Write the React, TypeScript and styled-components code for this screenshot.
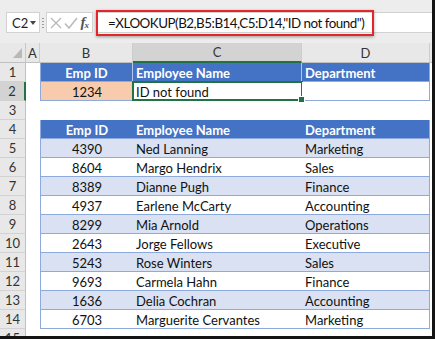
import React from 'react';
import styled, { createGlobalStyle, css } from 'styled-components';

const GlobalStyle = createGlobalStyle`
  html, body {
    margin: 0;
    padding: 0;
    background: #fff;
  }
  body {
    font-family: Lato, 'Liberation Sans', sans-serif;
    color: #111;
  }
`;

const Frame = styled.div`
  width: 435px;
  height: 339px;
  box-sizing: border-box;
  border-right: 3px solid #141414;
  border-bottom: 3px solid #141414;
  overflow: hidden;
  display: flex;
  flex-direction: column;
  background: #fff;
`;

const FormulaBar = styled.div`
  height: 43px;
  flex: none;
  box-sizing: border-box;
  background: #ededed;
  display: flex;
  align-items: flex-start;
  padding: 12px 0 0 6px;
`;

const NameBox = styled.div`
  width: 34px;
  height: 21px;
  box-sizing: border-box;
  background: #fff;
  border: 1px solid #d2d2d2;
  display: flex;
  align-items: center;
  padding-left: 5px;
  font-size: 13px;
  color: #222;
`;

const Caret = styled.span`
  width: 0;
  height: 0;
  margin-left: 2px;
  border-left: 3px solid transparent;
  border-right: 3px solid transparent;
  border-top: 4px solid #444;
`;

const Grip = styled.div`
  width: 2px;
  height: 11px;
  margin: 5px 2px 0 2px;
  background-image: radial-gradient(circle, #9a9a9a 0.8px, transparent 1px);
  background-size: 2px 3px;
`;

const ButtonBox = styled.div`
  width: 47px;
  height: 21px;
  box-sizing: border-box;
  background: #fff;
  border: 1px solid #d2d2d2;
  display: flex;
  align-items: center;
  justify-content: space-between;
  padding: 0 4px 0 3px;
`;

const Fx = styled.span`
  font-family: 'Liberation Serif', serif;
  font-style: italic;
  font-weight: bold;
  font-size: 15px;
  color: #555;
  letter-spacing: -1px;

  sub {
    font-size: 9px;
    vertical-align: -1px;
  }
`;

const FormulaInput = styled.div`
  flex: 1;
  height: 21px;
  margin-left: 3px;
  box-sizing: border-box;
  background: #fff;
  border-top: 1px solid #d2d2d2;
  border-bottom: 1px solid #d2d2d2;
  display: flex;
  align-items: center;
`;

const Highlight = styled.div`
  height: 26px;
  width: 278px;
  box-sizing: border-box;
  border: 2px solid #e3262b;
  box-shadow: 0 1px 3px rgba(0, 0, 0, 0.35);
  display: flex;
  align-items: center;
  padding-left: 10px;
  font-size: 13.4px;
  letter-spacing: -0.5px;
  color: #111;
  white-space: nowrap;
`;

const Sheet = styled.div`
  display: grid;
  grid-template-columns: 26px 14px 93px 169px 128px 1fr;
  grid-template-rows: 20px;
  grid-auto-rows: 19px;
  font-size: 13px;
`;

const Corner = styled.div`
  background: #e8e8e8;
  border-right: 1px solid #c8c8c8;
  border-bottom: 1px solid #c0c0c0;
  display: flex;
  align-items: flex-end;
  justify-content: flex-end;
  padding: 0 3px 4px 0;
  box-sizing: border-box;
`;

const Triangle = styled.span`
  width: 0;
  height: 0;
  border-left: 9px solid transparent;
  border-bottom: 10px solid #b9b9b9;
`;

const ColHead = styled.div<{ $active?: boolean; $open?: boolean }>`
  box-sizing: border-box;
  background: ${p => (p.$active ? '#d3d3d3' : '#e8e8e8')};
  border-right: ${p => (p.$open ? 'none' : '1px solid #cdcdcd')};
  border-bottom: ${p => (p.$active ? '2px solid #217346' : '1px solid #c0c0c0')};
  display: flex;
  align-items: center;
  justify-content: center;
  color: #333;
  font-size: 13px;
`;

const RowHead = styled.div<{ $active?: boolean }>`
  box-sizing: border-box;
  background: ${p => (p.$active ? '#d3d3d3' : '#e8e8e8')};
  border-bottom: 1px solid #d2d2d2;
  border-right: ${p => (p.$active ? '2px solid #217346' : '1px solid #c0c0c0')};
  display: flex;
  align-items: center;
  justify-content: center;
  color: #333;
  font-size: 13px;
`;

type Kind = 'none' | 'head' | 'band' | 'plain' | 'orange';

const Cell = styled.div<{
  $kind: Kind;
  $center?: boolean;
  $first?: boolean;
  $last?: boolean;
  $split?: boolean;
  $selected?: boolean;
}>`
  position: relative;
  box-sizing: border-box;
  display: flex;
  align-items: center;
  justify-content: ${p => (p.$center ? 'center' : 'flex-start')};
  padding: 1px 0 0 ${p => (p.$center ? 0 : 3)}px;
  white-space: nowrap;
  ${p =>
    p.$kind !== 'none' &&
    css`
      border-bottom: 1px solid #8ea9db;
      border-left: ${p.$first ? '1px solid #8ea9db' : 'none'};
      border-right: ${p.$last ? '1px solid #8ea9db' : p.$split ? '1px solid #b4c6e7' : 'none'};
    `}
  ${p => p.$kind === 'head' && css`
    background: #4472c4;
    color: #fff;
    font-weight: bold;
  `}
  ${p => p.$kind === 'band' && css`background: #d9e1f2;`}
  ${p => p.$kind === 'plain' && css`background: #fff;`}
  ${p => p.$kind === 'orange' && css`background: #f8cbad;`}
  ${p =>
    p.$selected &&
    css`
      &::after {
        content: '';
        position: absolute;
        left: -1px;
        top: -1px;
        right: -1px;
        bottom: -1px;
        border: 2px solid #217346;
      }
      &::before {
        content: '';
        position: absolute;
        right: -3px;
        bottom: -3px;
        width: 5px;
        height: 5px;
        background: #217346;
        border: 1px solid #fff;
        z-index: 1;
      }
    `}
`;

const Filler = styled.div``;

type Row = { cells: [string, string, string]; kind: Kind; split?: boolean };

const employees: [string, string, string][] = [
  ['4390', 'Ned Lanning', 'Marketing'],
  ['8604', 'Margo Hendrix', 'Sales'],
  ['8389', 'Dianne Pugh', 'Finance'],
  ['4937', 'Earlene McCarty', 'Accounting'],
  ['8299', 'Mia Arnold', 'Operations'],
  ['2643', 'Jorge Fellows', 'Executive'],
  ['5243', 'Rose Winters', 'Sales'],
  ['9693', 'Carmela Hahn', 'Finance'],
  ['1636', 'Delia Cochran', 'Accounting'],
  ['6703', 'Marguerite Cervantes', 'Marketing'],
];

const rows: (Row | null)[] = [
  { cells: ['Emp ID', 'Employee Name', 'Department'], kind: 'head', split: true },
  { cells: ['1234', 'ID not found', ''], kind: 'plain' },
  null,
  { cells: ['Emp ID', 'Employee Name', 'Department'], kind: 'head' },
  ...employees.map((e, i) => ({ cells: e, kind: (i % 2 === 0 ? 'band' : 'plain') as Kind })),
  null,
];

const CheckIcons = () => (
  <>
    <svg width="12" height="12" viewBox="0 0 12 12">
      <path d="M1 1 L11 11 M11 1 L1 11" stroke="#b8b8b8" strokeWidth="1.3" fill="none" />
    </svg>
    <svg width="14" height="12" viewBox="0 0 14 12">
      <path d="M1 6.5 L5 11 L13 1" stroke="#b8b8b8" strokeWidth="1.5" fill="none" />
    </svg>
    <Fx>
      f<sub>x</sub>
    </Fx>
  </>
);

export default function App() {
  return (
    <>
      <GlobalStyle />
      <Frame>
        <FormulaBar>
          <NameBox>
            C2
            <Caret />
          </NameBox>
          <Grip />
          <ButtonBox>
            <CheckIcons />
          </ButtonBox>
          <FormulaInput>
            <Highlight>=XLOOKUP(B2,B5:B14,C5:D14,"ID not found")</Highlight>
          </FormulaInput>
        </FormulaBar>
        <Sheet>
          <Corner>
            <Triangle />
          </Corner>
          <ColHead>A</ColHead>
          <ColHead>B</ColHead>
          <ColHead $active>C</ColHead>
          <ColHead>D</ColHead>
          <ColHead $open />
          {rows.map((row, i) => (
            <React.Fragment key={i}>
              <RowHead $active={i === 1}>{i + 1}</RowHead>
              <Cell $kind="none" />
              {row ? (
                <>
                  <Cell
                    $kind={i === 1 ? 'orange' : row.kind}
                    $center
                    $first
                    $split={row.split}
                  >
                    {row.cells[0]}
                  </Cell>
                  <Cell $kind={row.kind} $split={row.split} $selected={i === 1}>
                    {row.cells[1]}
                  </Cell>
                  <Cell $kind={row.kind} $last>
                    {row.cells[2]}
                  </Cell>
                </>
              ) : (
                <>
                  <Cell $kind="none" />
                  <Cell $kind="none" />
                  <Cell $kind="none" />
                </>
              )}
              <Filler />
            </React.Fragment>
          ))}
        </Sheet>
      </Frame>
    </>
  );
}
